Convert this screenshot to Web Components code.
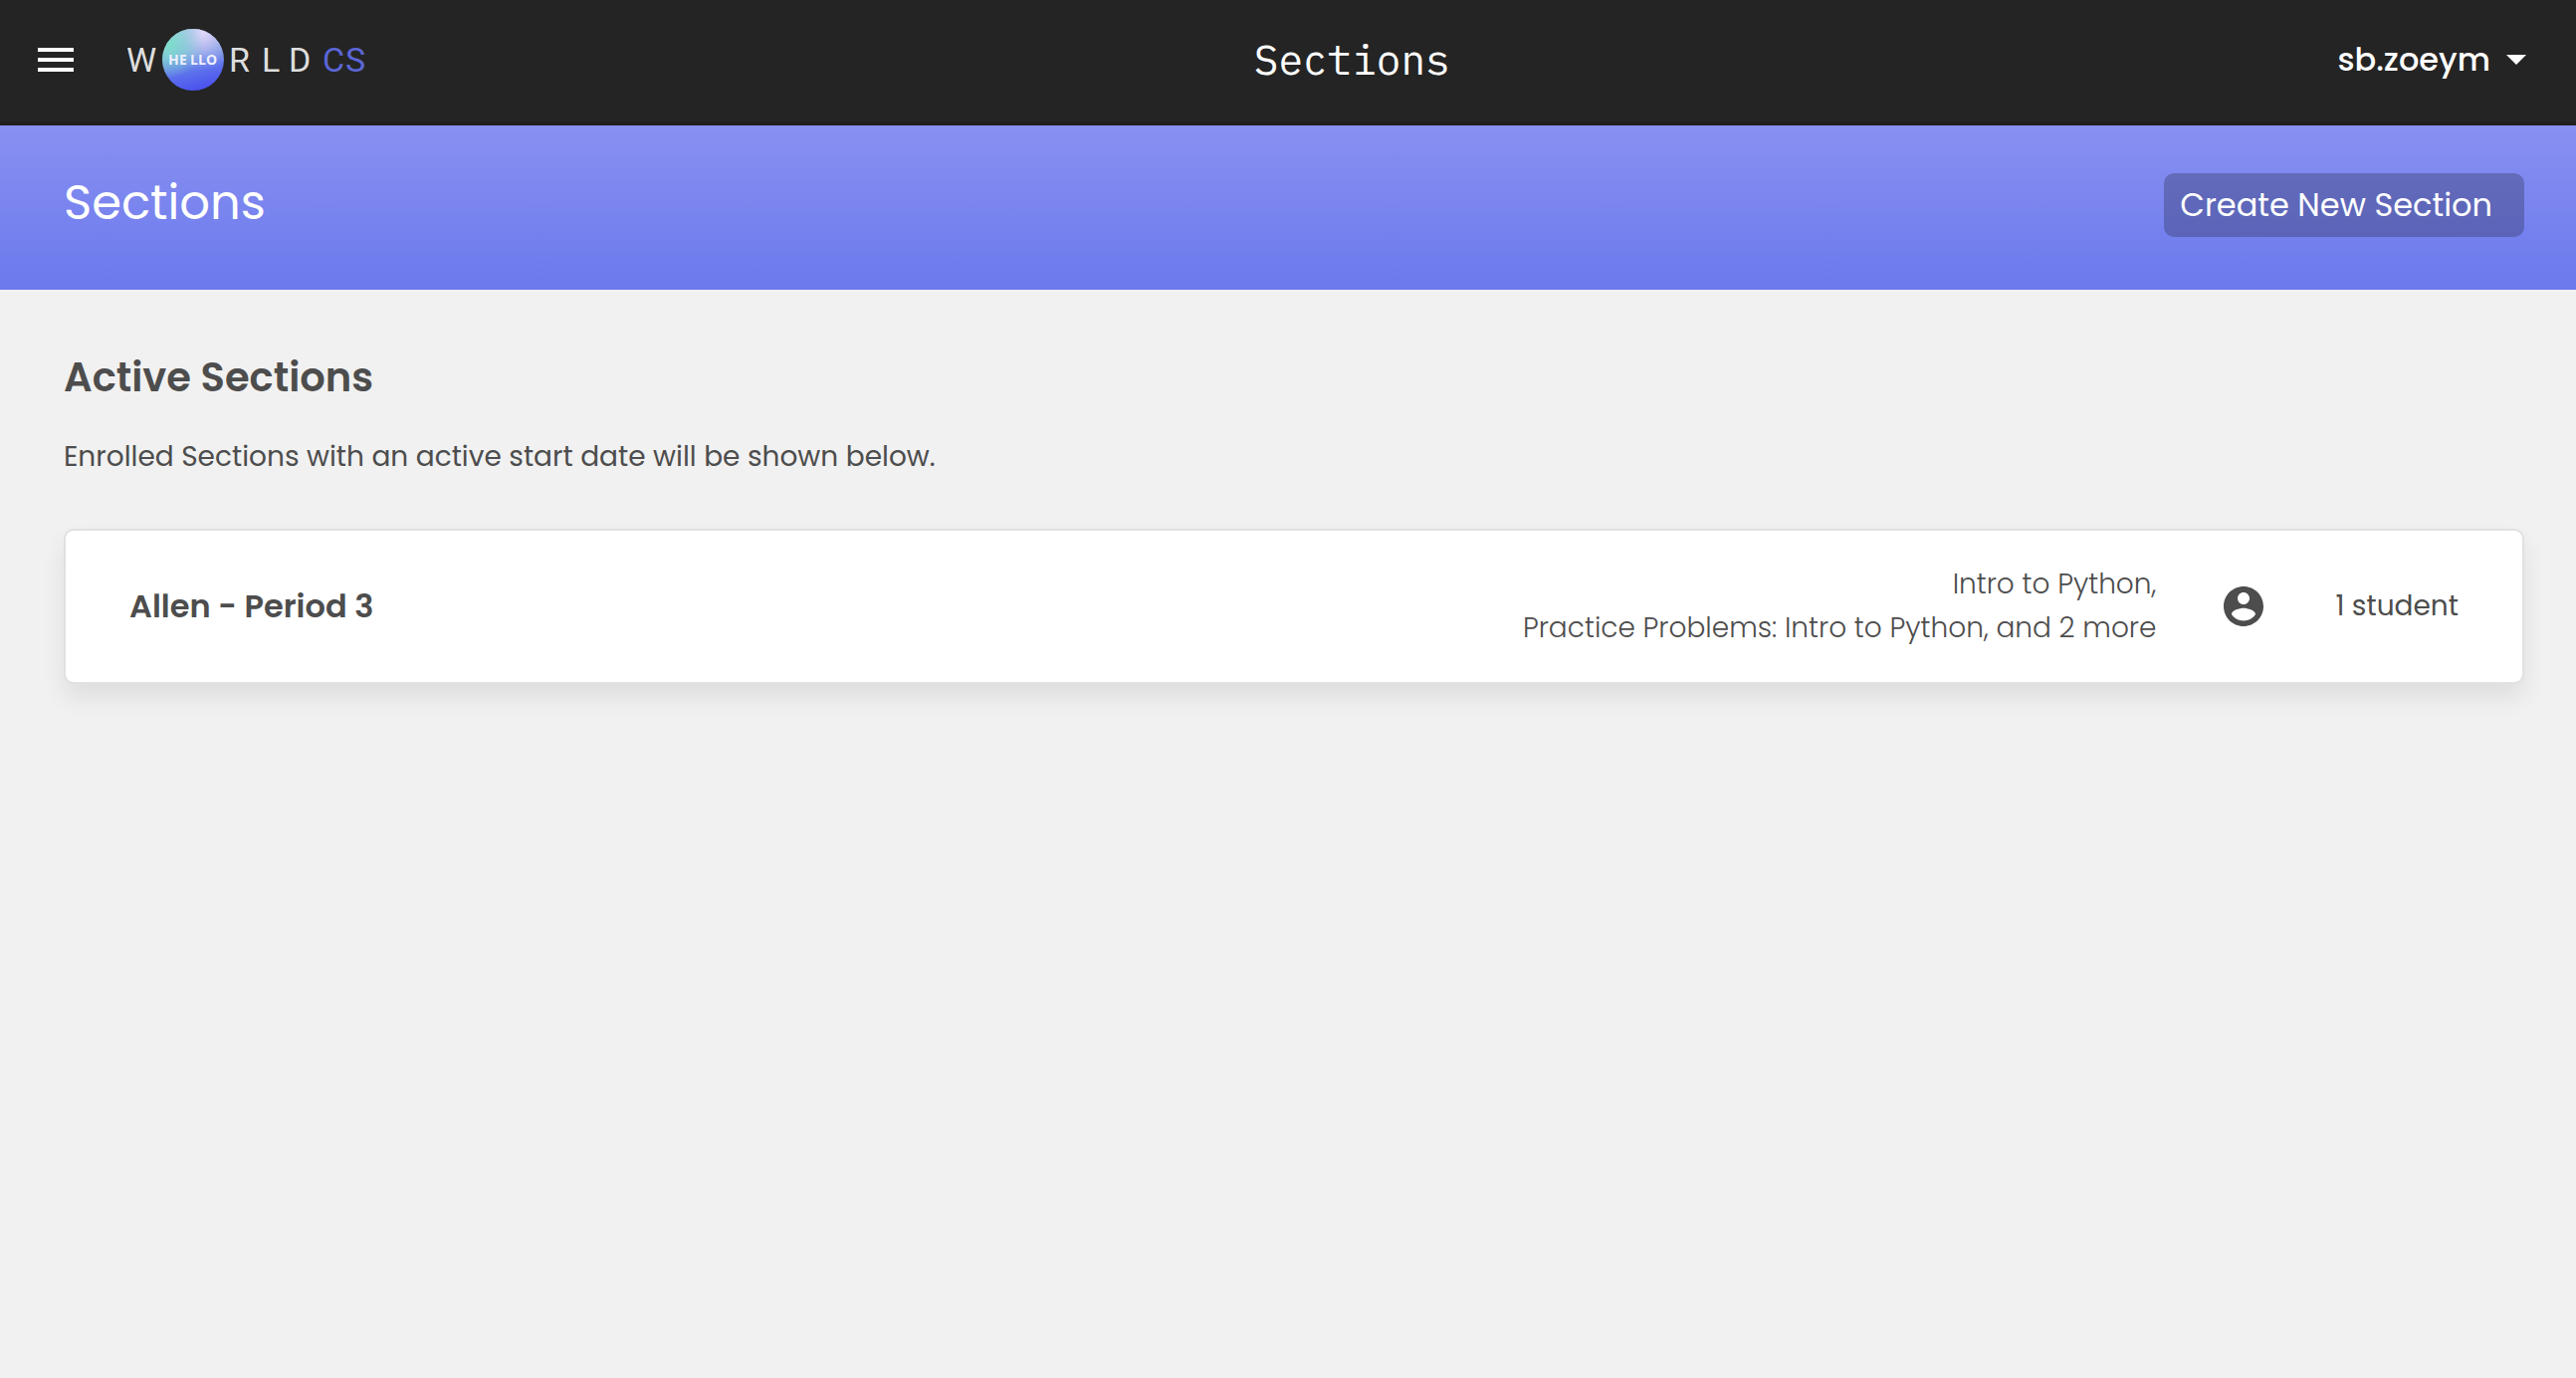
<!DOCTYPE html>
<html lang="en">
<head>
<meta charset="utf-8">
<title>Sections</title>
<style>
  body { margin: 0; min-height: 100vh; background: #f1f1f1; color: #4d4d4d; font-family: Poppins, Inter, sans-serif; }
</style>
</head>
<body>
<app-header>
  <world-logo slot="logo"></world-logo>
  <span slot="title">Sections</span>
  <span slot="user">sb.zoeym</span>
</app-header>
<page-banner>
  <span slot="heading">Sections</span>
  <span slot="action">Create New Section</span>
</page-banner>
<section-list>
  <span slot="heading">Active Sections</span>
  <span slot="note">Enrolled Sections with an active start date will be shown below.</span>
  <section-card>
    <span slot="name">Allen - Period 3</span>
    <span slot="courses">Intro to Python,<br>Practice Problems: Intro to Python, and 2 more</span>
    <span slot="count">1 student</span>
  </section-card>
</section-list>

<script>
const define = (name, html) => {
  const template = document.createElement('template');
  template.innerHTML = html;
  customElements.define(name, class extends HTMLElement {
    constructor() {
      super();
      this.attachShadow({ mode: 'open' }).append(template.content.cloneNode(true));
    }
  });
};

define('world-logo', `
  <style>
    :host { display: block; }
    a { display: block; }
    svg { display: block; width: 240px; height: 64px; }
    text { font-family: Roboto, sans-serif; font-size: 34px; fill: #dedede; }
    .cs { fill: #5b66d6; }
    .hello { font-family: "Open Sans", sans-serif; font-size: 14px; font-weight: 700; fill: #eef0ff; }
  </style>
  <a href="#" aria-label="Hello World CS">
    <svg viewBox="0 0 240 64">
      <defs>
        <linearGradient id="base" x1="0.35" y1="0" x2="0.6" y2="1">
          <stop offset="0" stop-color="#a9dfe0"/>
          <stop offset="0.35" stop-color="#84b5df"/>
          <stop offset="0.7" stop-color="#5c70ec"/>
          <stop offset="1" stop-color="#4a50ee"/>
        </linearGradient>
        <radialGradient id="pink" cx="0.66" cy="0.06" r="0.62">
          <stop offset="0" stop-color="#e2d8f8"/>
          <stop offset="0.35" stop-color="#c6bef4" stop-opacity="0.8"/>
          <stop offset="1" stop-color="#8f90f0" stop-opacity="0"/>
        </radialGradient>
        <radialGradient id="mint" cx="0.12" cy="0.24" r="0.55">
          <stop offset="0" stop-color="#7ce0c8" stop-opacity="0.9"/>
          <stop offset="1" stop-color="#7ce0d0" stop-opacity="0"/>
        </radialGradient>
      </defs>
      <text x="-1" y="44">W</text>
      <circle cx="66" cy="32" r="31" fill="url(#base)"/>
      <circle cx="66" cy="32" r="31" fill="url(#pink)"/>
      <circle cx="66" cy="32" r="31" fill="url(#mint)"/>
      <text class="hello" x="41 52 63 71 79" y="37">HELLO</text>
      <text x="102 135 162" y="44">RLD</text>
      <text class="cs" x="196 219" y="44">CS</text>
    </svg>
  </a>`);

define('app-header', `
  <style>
    :host { display: block; background: #242424; border-bottom: 4px solid #1f1f1f; color: #fff; }
    header { display: flex; align-items: center; justify-content: space-between; padding: 28px 50px 30px 38px; }
    .start { display: flex; align-items: center; gap: 54px; }
    button { display: flex; align-items: center; padding: 0; border: 0; background: none; color: inherit; font: inherit; }
    .menu svg { width: 36px; height: 24px; }
    .title { font: 400 41px/64px "IBM Plex Mono", "Liberation Mono", monospace; }
    .user { gap: 16px; font-size: 32px; font-weight: 500; line-height: 48px; }
    .user svg { width: 20px; height: 10px; }
  </style>
  <header>
    <div class="start">
      <button class="menu" aria-label="Menu">
        <svg viewBox="0 0 36 24" fill="currentColor"><path d="M0 0h36v4H0zM0 10h36v4H0zM0 20h36v4H0z"/></svg>
      </button>
      <slot name="logo"></slot>
    </div>
    <div class="title"><slot name="title"></slot></div>
    <button class="user">
      <slot name="user"></slot>
      <svg viewBox="0 0 20 10" fill="currentColor"><path d="M0 0h20L10 10z"/></svg>
    </button>
  </header>`);

define('page-banner', `
  <style>
    :host { display: block; background: linear-gradient(#8890f1, #6b79ec); color: #fff; }
    div { display: flex; align-items: flex-end; justify-content: space-between; padding: 46px 52px 53px 64px; }
    h1 { margin: 0; padding-bottom: 2px; font-size: 48px; font-weight: 400; line-height: 64px; }
    button { padding: 8px 32px 8px 16px; border: 0; border-radius: 10px; background: rgba(0, 0, 0, 0.22); color: inherit; font: inherit; font-size: 32px; line-height: 48px; }
  </style>
  <div>
    <h1><slot name="heading"></slot></h1>
    <button><slot name="action"></slot></button>
  </div>`);

define('section-list', `
  <style>
    :host { display: block; padding: 56px 52px 64px 64px; }
    h2 { margin: 0 0 24px; font-size: 40px; font-weight: 600; line-height: 64px; }
    p { margin: 0 0 48px; font-size: 28px; line-height: 48px; }
  </style>
  <h2><slot name="heading"></slot></h2>
  <p><slot name="note"></slot></p>
  <slot></slot>`);

define('section-card', `
  <style>
    :host { display: block; }
    article { display: flex; align-items: center; padding: 32px 64px; border: 2px solid #e1e1e1; border-radius: 10px; background: #fff; box-shadow: 0 14px 24px rgba(0, 0, 0, 0.08); }
    h3 { flex: 1; margin: 0; font-size: 32px; font-weight: 600; line-height: 48px; }
    .courses { font-size: 28px; font-weight: 300; line-height: 44px; text-align: right; }
    svg { width: 48px; height: 48px; margin: 0 68px 0 64px; }
    .count { font-size: 28px; line-height: 44px; }
  </style>
  <article>
    <h3><slot name="name"></slot></h3>
    <div class="courses"><slot name="courses"></slot></div>
    <svg viewBox="0 0 24 24" fill="currentColor" aria-hidden="true"><path d="M12 2C6.480 2 2 6.480 2 12s4.480 10 10 10 10-4.480 10-10S17.520 2 12 2zm0 3c1.660 0 3 1.340 3 3s-1.340 3-3 3-3-1.340-3-3 1.340-3 3-3zm0 14.200c-2.500 0-4.710-1.280-6-3.220.030-1.990 4-3.080 6-3.080 1.990 0 5.970 1.090 6 3.080-1.290 1.940-3.500 3.220-6 3.220z"/></svg>
    <div class="count"><slot name="count"></slot></div>
  </article>`);
</script>
</body>
</html>
